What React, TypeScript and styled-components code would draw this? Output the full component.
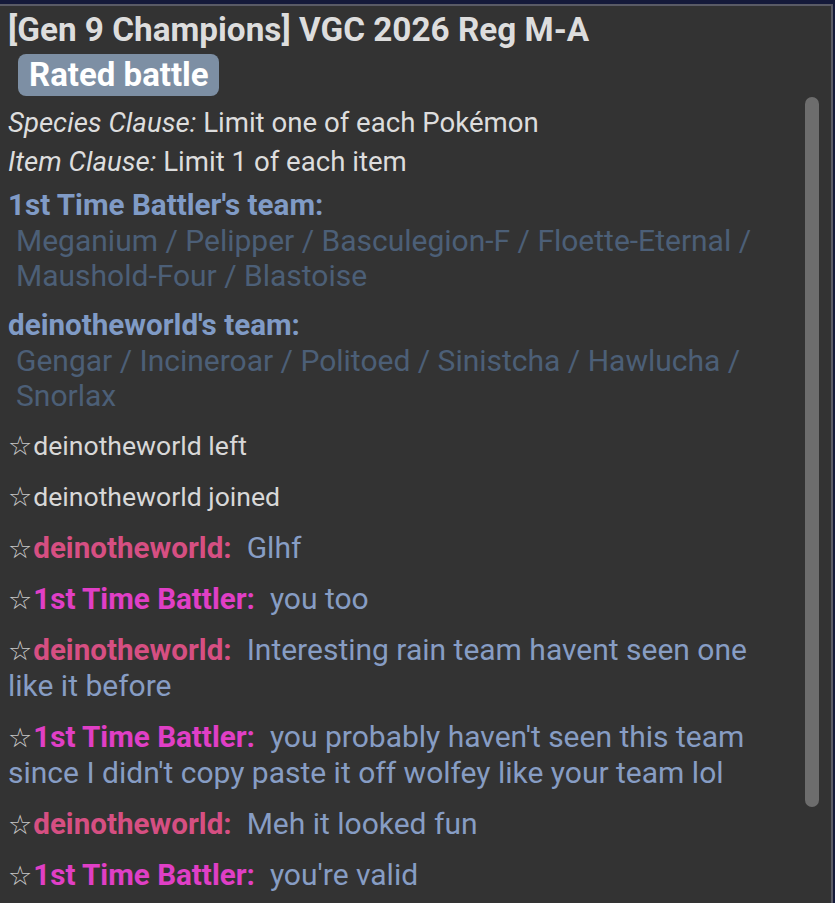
import React from "react";
import styled, { createGlobalStyle } from "styled-components";

const Global = createGlobalStyle`
  html, body { margin: 0; padding: 0; background: #151a3a; }
  body { font-family: Roboto, "Noto Sans", "Liberation Sans", sans-serif; overflow: hidden; }
`;

const Panel = styled.div`
  position: relative;
  margin-top: 4px;
  width: 831px;
  height: 897px;
  background: #333333;
  border-top: 2px solid #5a5b66;
  border-right: 2px solid #5a5b66;
  overflow: hidden;
`;

const Log = styled.div`
  padding: 6px 40px 0 8px;
  display: flex;
  flex-direction: column;
  color: #dddddd;
`;

const Title = styled.h2`
  margin: 0;
  font-size: 33.3px;
  line-height: 35px;
  font-weight: 700;
  color: #dddddd;
  white-space: nowrap;
`;

const BadgeRow = styled.div`
  display: flex;
  padding: 7px 0 0 10px;
`;

const Badge = styled.span`
  display: inline-block;
  background: #7d8fa4;
  color: #ffffff;
  font-weight: 700;
  font-size: 33px;
  line-height: 42px;
  padding: 0 10px 0 11px;
  border-radius: 8px;
`;

const Rule = styled.div<{ $mt: number }>`
  margin-top: ${(p) => p.$mt}px;
  font-size: 27.6px;
  line-height: 35px;
  color: #dddddd;
  em { font-style: italic; }
`;

const TeamBlock = styled.div<{ $mt: number }>`
  margin-top: ${(p) => p.$mt}px;
  font-size: 30px;
  line-height: 35px;
`;

const TeamHead = styled.div`
  font-weight: 700;
  font-size: 29.6px;
  color: #809bc6;
`;

const TeamList = styled.div`
  padding-left: 8px;
  color: #4c5f77;
`;

const Chat = styled.div`
  margin-top: 15px;
  display: flex;
  flex-direction: column;
  gap: 15px;
`;

const Line = styled.div<{ $notice?: boolean }>`
  font-size: ${(p) => (p.$notice ? "26.6px" : "30px")};
  line-height: 36px;
  color: ${(p) => (p.$notice ? "#d8d8d8" : "#879dc4")};
`;

const Star = styled.span`
  color: #c8c8c8;
  font-size: 27px;
  line-height: 1;
  font-family: "DejaVu Sans", sans-serif;
  margin-right: 1px;
`;

const Name = styled.strong<{ $c: string }>`
  color: ${(p) => p.$c};
  font-weight: 700;
  font-size: 29.6px;
  line-height: 1;
  margin-right: 15px;
`;

const ScrollThumb = styled.div`
  position: absolute;
  left: 805px;
  top: 91px;
  width: 14px;
  height: 710px;
  border-radius: 7px;
  background: #6d6d6d;
`;

const RED = "#d64f82";
const MAG = "#e03fc6";

const msgs: { name?: string; color?: string; text: string }[] = [
  { text: "deinotheworld left" },
  { text: "deinotheworld joined" },
  { name: "deinotheworld", color: RED, text: "Glhf" },
  { name: "1st Time Battler", color: MAG, text: "you too" },
  { name: "deinotheworld", color: RED, text: "Interesting rain team havent seen one like it before" },
  { name: "1st Time Battler", color: MAG, text: "you probably haven't seen this team since I didn't copy paste it off wolfey like your team lol" },
  { name: "deinotheworld", color: RED, text: "Meh it looked fun" },
  { name: "1st Time Battler", color: MAG, text: "you're valid" },
];

export default function App() {
  return (
    <>
      <Global />
      <Panel>
        <Log>
          <Title>[Gen 9 Champions] VGC 2026 Reg M-A</Title>
          <BadgeRow>
            <Badge>Rated battle</Badge>
          </BadgeRow>
          <Rule $mt={9}>
            <em>Species Clause:</em> Limit one of each Pokémon
          </Rule>
          <Rule $mt={4}>
            <em>Item Clause:</em> Limit 1 of each item
          </Rule>
          <TeamBlock $mt={9}>
            <TeamHead>1st Time Battler's team:</TeamHead>
            <TeamList>Meganium / Pelipper / Basculegion-F / Floette-Eternal / Maushold-Four / Blastoise</TeamList>
          </TeamBlock>
          <TeamBlock $mt={15}>
            <TeamHead>deinotheworld's team:</TeamHead>
            <TeamList>Gengar / Incineroar / Politoed / Sinistcha / Hawlucha / Snorlax</TeamList>
          </TeamBlock>
          <Chat>
            {msgs.map((m, i) => (
              <Line key={i} $notice={!m.name}>
                <Star>☆</Star>
                {m.name ? <Name $c={m.color!}>{m.name}:</Name> : null}
                {m.text}
              </Line>
            ))}
          </Chat>
        </Log>
        <ScrollThumb />
      </Panel>
    </>
  );
}
